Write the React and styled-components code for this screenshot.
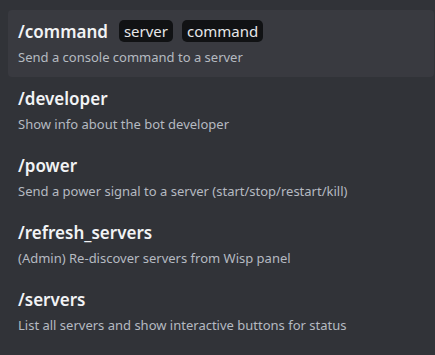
import React from 'react';
import styled, { createGlobalStyle } from 'styled-components';

const GlobalStyle = createGlobalStyle`
  html, body {
    margin: 0;
    padding: 0;
    background: #313338;
  }
  body {
    font-family: "Noto Sans", "Open Sans", sans-serif;
  }
`

const List = styled.div`
  width: 435px;
  height: 355px;
  box-sizing: border-box;
  padding: 10px 1px 0 8px;
  display: flex;
  flex-direction: column;
  background: #313338;
  overflow: hidden;
`

const Row = styled.div`
  height: 67px;
  box-sizing: border-box;
  padding: 8px 10px 0 10px;
  border-radius: 4px;
  background: ${p => (p.$active ? '#393a40' : 'transparent')};
  display: flex;
  flex-direction: column;
  gap: 3px;
`

const TitleLine = styled.div`
  display: flex;
  align-items: center;
  gap: 9px;
  height: 26px;
`

const Name = styled.span`
  color: #f2f3f5;
  font-size: 17px;
  font-weight: 600;
  margin-right: 2px;
`

const Option = styled.span`
  background: #111214;
  color: #e6e7e9;
  font-size: 15px;
  font-weight: 400;
  padding: 0 5px;
  height: 22px;
  line-height: 22px;
  border-radius: 5px;
`

const Desc = styled.div`
  color: #b5bac1;
  font-size: 13px;
  line-height: 18px;
  margin-top: 1px;
`

const commands = [
  { name: '/command', options: ['server', 'command'], desc: 'Send a console command to a server', active: true },
  { name: '/developer', desc: 'Show info about the bot developer' },
  { name: '/power', desc: 'Send a power signal to a server (start/stop/restart/kill)' },
  { name: '/refresh_servers', desc: '(Admin) Re-discover servers from Wisp panel' },
  { name: '/servers', desc: 'List all servers and show interactive buttons for status' },
];

export default function App() {
  return (
    <>
      <GlobalStyle />
      <List>
        {commands.map(c => (
          <Row key={c.name} $active={c.active}>
            <TitleLine>
              <Name>{c.name}</Name>
              {(c.options || []).map(o => (
                <Option key={o}>{o}</Option>
              ))}
            </TitleLine>
            <Desc>{c.desc}</Desc>
          </Row>
        ))}
      </List>
    </>
  );
}
